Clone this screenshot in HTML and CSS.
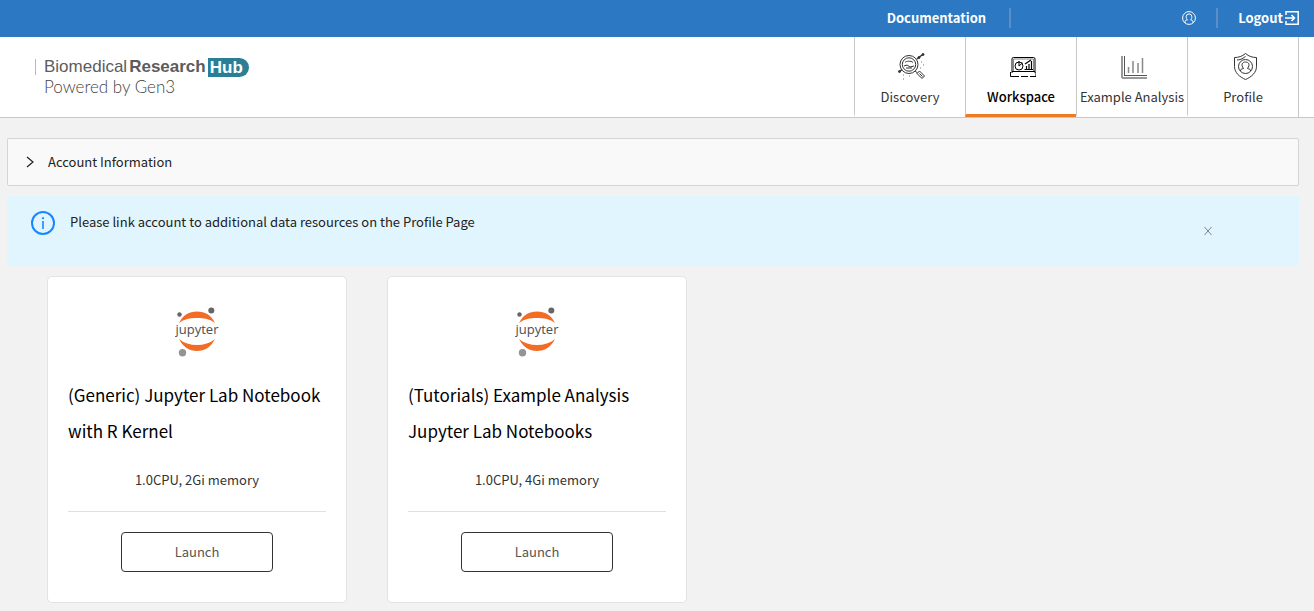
FILE: index.html
```html
<!DOCTYPE html>
<html lang="en">
<head>
<meta charset="utf-8">
<title>Biomedical Research Hub - Workspace</title>
<link rel="stylesheet" href="styles.css">
</head>
<body>
<header>
  <div class="top-bar">
    <a class="top-link docs" href="#">Documentation</a>
    <a class="top-link user" href="#" aria-label="User">
      <svg width="14" height="14" viewBox="0 0 14 14" fill="none" stroke="#fff">
        <circle cx="7" cy="7" r="6.400"/>
        <path d="M3 12v-1.500c0-1 1-1.300 2.500-1.500C4.300 8 4.200 7 4.200 5.700a2.800 2.800 0 0 1 5.600 0C9.800 7 9.700 8 8.500 9c1.500.2 2.500.5 2.500 1.500V12"/>
      </svg>
    </a>
    <a class="top-link logout" href="#">Logout
      <svg width="14" height="14" viewBox="0 0 14 14" fill="none" stroke="#fff" stroke-width="1.500">
        <path d="M1 4V.8h12.200v12.400H1V10M0 7h9.500M6.500 4l3 3-3 3"/>
      </svg>
    </a>
  </div>
  <div class="nav-bar">
    <a class="brand" href="#">
      <span class="brand-name">Biomedical <b>Research</b> <b class="hub">Hub</b></span>
      <span class="brand-sub">Powered by Gen3</span>
    </a>
    <nav>
      <a class="tab" href="#">
        <svg width="30" height="30" viewBox="-2 -1 30 30" fill="none" stroke="#333">
          <circle cx="12" cy="12.500" r="9"/><circle cx="12" cy="12.500" r="6.700"/>
          <path d="m18 19 2.500 2M20 21.500l2.500-2.500 5 5-2.500 2.500ZM22.500 21.500l3 3"/>
          <path d="M8 10.500c1-1.500 6-2 8 0M7 14l3-1 3 2 4-1M9 16h6"/>
          <path d="m20 7 3-2.500 3-2M2 20l3-2.500" stroke-width="1.500"/>
          <circle cx="26" cy="2.500" r="1" fill="#333"/><circle cx="22" cy="5.500" r="1" fill="#333"/><circle cx="2.500" cy="19.500" r="1" fill="#333"/>
          <path d="M24 10h1M26 13h1M23 16h1M12 24h1M6 23h1M6 27h1" stroke="#777"/>
        </svg>
        <span>Discovery</span>
      </a>
      <a class="tab active" href="#" aria-current="page">
        <svg width="30" height="30" viewBox="-3 -2 30 30" fill="none" stroke="#000">
          <path d="M3 20V6q0-1.500 1.500-1.500h20q1.500 0 1.500 1.500v14"/>
          <path d="M4.500 19V6h20v13" stroke="#888"/>
          <path d="M3 18.500h23M1.500 19v4.500H10M27 19v4.500H21M12 23.500h7"/>
          <circle cx="10" cy="13" r="4"/><path d="M10 13V8M10 13l3.500-3"/>
          <path d="M17.500 16v-3M20 16v-5M22.500 16V8M16 11l6-4M15.500 16.500H24" stroke-width="1.200"/>
        </svg>
        <span>Workspace</span>
      </a>
      <a class="tab" href="#">
        <svg class="chart-icon" width="30" height="30" viewBox="-3 -1 30 30" fill="none">
          <path d="M2 4v22M2 26h25" stroke="#999" stroke-width="2"/>
          <path d="M4.500 4v19M4 23.500h23" stroke="#555"/>
          <path d="M8.500 21v-6M13 21V9M18 21V11M22.500 21V6" stroke="#888" stroke-width="1.500"/>
        </svg>
        <span>Example Analysis</span>
      </a>
      <a class="tab" href="#">
        <svg width="30" height="30" viewBox="-2 -1 30 30" fill="none" stroke="#333">
          <path d="M15.500 1.500C12 4.500 8.500 5.500 4.500 5.500v9c0 6 5 10.500 11 13 6-2.500 11-7 11-13v-9c-4 0-7.500-1-11-4Z"/>
          <path d="M7 8c3 0 5-1 8.500-3.500"/>
          <circle cx="15.500" cy="14.500" r="7"/>
          <path d="M10.500 19v-1c.5-1 1.500-1 3-1.500-3-4-1-6.500 2-6.500s5 2.500 2 6.500c1.500.5 2.500.5 3 1.500v1"/>
        </svg>
        <span>Profile</span>
      </a>
    </nav>
  </div>
</header>
<main>
  <button class="collapse" type="button" aria-expanded="false">
    <svg width="10" height="12" viewBox="0 0 10 12" fill="none" stroke="#222" stroke-width="1.200"><path d="m1 1 6 5-6 5"/></svg>
    Account Information
  </button>
  <section class="alert" role="status">
    <svg width="24" height="24" viewBox="0 0 24 24" fill="none" stroke="#1687ff">
      <circle cx="12" cy="12" r="11" stroke-width="2"/>
      <path d="M12 10v8" stroke-width="1.600"/><circle cx="12" cy="7.200" r=".7" fill="#1687ff"/>
    </svg>
    <p>Please link account to additional data resources on the Profile Page</p>
    <button class="close" type="button" aria-label="Close">
      <svg width="10" height="10" viewBox="0 0 10 10" fill="none" stroke="#7b8790"><path d="m1.500 1 7 8M8.500 1l-7 8"/></svg>
    </button>
  </section>
  <div class="cards">
    <article class="card">
      <svg class="logo" viewBox="0 0 44 50" role="img" aria-label="Jupyter">
        <path d="M4 16C8 8 14 4.500 22 4.500s14 3.500 18 11.500C35 12 29 11 22 11S9 12 4 16Z" fill="#f26c25"/>
        <path d="M4 32c4 8 10 12 18 12s14-4 18-12c-5 4-11 6-18 6S9 36 4 32Z" fill="#f26c25"/>
        <circle cx="36.300" cy="3.600" r="3" fill="#666"/>
        <circle cx="4.500" cy="7.500" r="2.200" fill="#666"/>
        <circle cx="7.500" cy="45.800" r="3.700" fill="#949494"/>
        <text x="22" y="27" text-anchor="middle" class="jupyter-word">jupyter</text>
      </svg>
      <h2>(Generic) Jupyter Lab Notebook with R Kernel</h2>
      <p>1.0CPU, 2Gi memory</p>
      <div class="action"><button class="launch" type="button">Launch</button></div>
    </article>
    <article class="card">
      <svg class="logo" viewBox="0 0 44 50" role="img" aria-label="Jupyter">
        <path d="M4 16C8 8 14 4.500 22 4.500s14 3.500 18 11.500C35 12 29 11 22 11S9 12 4 16Z" fill="#f26c25"/>
        <path d="M4 32c4 8 10 12 18 12s14-4 18-12c-5 4-11 6-18 6S9 36 4 32Z" fill="#f26c25"/>
        <circle cx="36.300" cy="3.600" r="3" fill="#666"/>
        <circle cx="4.500" cy="7.500" r="2.200" fill="#666"/>
        <circle cx="7.500" cy="45.800" r="3.700" fill="#949494"/>
        <text x="22" y="27" text-anchor="middle" class="jupyter-word">jupyter</text>
      </svg>
      <h2>(Tutorials) Example Analysis Jupyter Lab Notebooks</h2>
      <p>1.0CPU, 4Gi memory</p>
      <div class="action"><button class="launch" type="button">Launch</button></div>
    </article>
  </div>
</main>
</body>
</html>
```
FILE: styles.css
```css
* { box-sizing: border-box; }
body {
  margin: 0;
  background: #f2f2f2;
  color: #222;
  font: 13px/20px "Noto Sans CJK SC", sans-serif;
}
a { color: inherit; text-decoration: none; }
p, h2 { margin: 0; }
button { font: inherit; color: inherit; cursor: pointer; }

.top-bar {
  display: flex;
  justify-content: flex-end;
  align-items: center;
  height: 37px;
  padding: 0 15px 2px 0;
  background: #2c78c2;
  color: #fff;
  font-weight: 600;
}
.top-link { display: flex; align-items: center; height: 20px; }
.docs, .user { border-right: 2px solid #5b8dc7; }
.docs { padding-right: 23px; }
.user { justify-content: flex-end; width: 207px; padding-right: 20px; }
.logout { gap: 2px; padding-left: 20px; }

.nav-bar {
  display: flex;
  justify-content: space-between;
  height: 81px;
  padding-right: 15px;
  background: #fff;
  border-bottom: 1px solid #c8c8c8;
}
.brand { padding: 20px 0 0 35px; color: #5c5c5c; }
.brand-name {
  display: flex;
  gap: 2px;
  align-items: center;
  height: 20px;
  font: 17px/20px "Liberation Sans", Arial, sans-serif;
}
.brand-name::before {
  content: "";
  width: 1px;
  height: 16px;
  margin-right: 6px;
  background: #9bc5cd;
}
.hub {
  padding: 0 6px 0 2px;
  background: #2a7f97;
  color: #fff;
  border-radius: 0 10px 10px 0;
  line-height: 19px;
}
.brand-sub {
  display: block;
  padding-left: 9px;
  color: #444;
  font: 300 17px/20px Lato, sans-serif;
}

nav { display: flex; border-right: 1px solid #c8c8c8; }
.tab {
  display: flex;
  flex-direction: column;
  align-items: center;
  width: 111px;
  padding-top: 14px;
  gap: 6px;
  border-left: 1px solid #c8c8c8;
  border-bottom: 3px solid transparent;
  color: #333;
  white-space: nowrap;
}
.tab.active { border-bottom-color: #ee7a22; color: #000; font-weight: 500; }

main { padding: 20px 15px 8px 7px; }
.collapse {
  display: flex;
  align-items: center;
  gap: 12px;
  width: 100%;
  height: 48px;
  padding: 0 18px;
  background: #f9f9f9;
  border: 1px solid #d4d4d4;
  border-radius: 2px;
}
.alert {
  display: flex;
  gap: 15px;
  height: 70px;
  margin: 10px 0;
  padding: 15px 86px 0 24px;
  background: #e1f5fe;
}
.alert p { flex: 1; padding-top: 1px; }
.close {
  display: flex;
  align-self: flex-start;
  margin-top: 15px;
  padding: 0;
  border: 0;
  background: none;
}

.cards { display: flex; flex-wrap: wrap; gap: 40px; padding-left: 40px; }
.card {
  display: flex;
  flex-direction: column;
  width: 300px;
  padding: 30px 20px;
  background: #fff;
  border: 1px solid #e3e3e3;
  border-radius: 5px;
  text-align: center;
}
.logo { align-self: center; width: 44px; height: 50px; }
.jupyter-word { font: 13px "Open Sans", sans-serif; fill: #4e4e4e; }
.card h2 {
  margin: 20px 0 21px;
  font-size: 17px;
  line-height: 36px;
  font-weight: 400;
  color: #000;
  text-align: left;
}
.card p { color: #333; }
.action { margin-top: 21px; padding-top: 20px; border-top: 1px solid #e0e0e0; }
.launch {
  width: 152px;
  height: 40px;
  background: #fff;
  border: 1px solid #333;
  border-radius: 4px;
  color: #555;
}
```
